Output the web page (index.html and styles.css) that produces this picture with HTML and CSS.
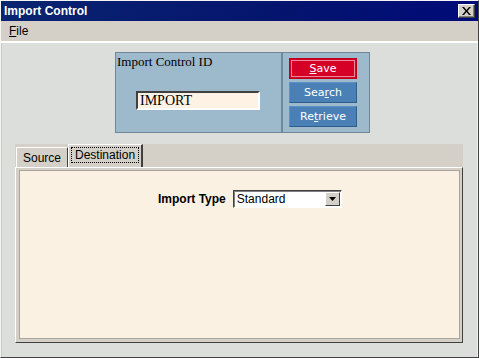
FILE: index.html
```html
<!DOCTYPE html>
<html lang="en">

<head>
    <meta charset="UTF-8">
    <title>Import Control</title>
    <link rel="stylesheet" href="styles.css">
</head>

<body>
    <div class="window">
        <!-- Title Bar -->
        <div class="titlebar">
            <span class="title">Import Control</span>
            <button class="close-btn">
                <svg width="9" height="8" viewBox="0 0 9 8">
                    <path d="M0 0h2l2.5 3L7 0h2L5.5 4L9 8H7L4.5 5L2 8H0l3.5-4z" fill="#000"/>
                </svg>
            </button>
        </div>

        <!-- Menu -->
        <div class="menubar">
            <span class="menu-item"><u>F</u>ile</span>
        </div>
        <div class="rule"></div>

        <div class="client">
            <!-- Header Box -->
            <div class="header-box">
                <div class="id-area">
                    <div class="id-label">Import Control ID</div>
                    <input class="id-input" type="text" value="IMPORT">
                </div>
                <div class="btn-area">
                    <button class="btn btn-save"><u>S</u>ave</button>
                    <button class="btn">Sea<u>r</u>ch</button>
                    <button class="btn">Re<u>t</u>rieve</button>
                </div>
            </div>

            <!-- Tabs -->
            <div class="tabs">
                <div class="tab">Source</div>
                <div class="tab active"><span class="focus">Destination</span></div>
            </div>
            <div class="panel">
                <div class="panel-body">
                    <div class="field-row">
                        <span class="field-label">Import Type</span>
                        <div class="select">
                            <span class="select-value">Standard</span>
                            <span class="select-arrow">
                                <svg width="7" height="4" viewBox="0 0 7 4"><path d="M0 0h7L3.5 4z" fill="#000"/></svg>
                            </span>
                        </div>
                    </div>
                </div>
            </div>
        </div>
    </div>
</body>

</html>
```

FILE: styles.css
```css
body {
    margin: 0;
    font-family: "Liberation Sans", Arial, sans-serif;
}

.window {
    width: 479px;
    height: 358px;
    box-sizing: border-box;
    border: 1px solid;
    border-color: #f4f4f4 #404040 #404040 #f4f4f4;
    background-color: #dcdedb;
    display: flex;
    flex-direction: column;
}

/* Title Bar */
.titlebar {
    height: 20px;
    flex: none;
    display: flex;
    align-items: center;
    justify-content: space-between;
    padding: 0 3px 0 3px;
    background: linear-gradient(to right, #0a2470, #04146e 60%, #000a78);
}

.title {
    color: #fff;
    font-weight: bold;
    font-size: 12px;
}

.close-btn {
    width: 17px;
    height: 14px;
    padding: 0;
    display: flex;
    align-items: center;
    justify-content: center;
    background-color: #d4d0c8;
    border: 1px solid;
    border-color: #fff #404040 #404040 #fff;
    box-shadow: inset -1px -1px 0 #808080;
}

/* Menu */
.menubar {
    height: 20px;
    flex: none;
    background-color: #d4d0c8;
    display: flex;
    align-items: center;
    padding-left: 8px;
}

.menu-item {
    font-size: 12px;
    color: #000;
}

.rule {
    height: 2px;
    flex: none;
    background-color: #fff;
}

.client {
    flex: 1;
    padding-top: 9px;
    border-left: 1px solid #c8c8c4;
    border-right: 1px solid #f0f0f0;
}

/* Header Box */
.header-box {
    display: flex;
    width: 255px;
    height: 81px;
    box-sizing: border-box;
    margin-left: 113px;
    border: 1px solid #6f8797;
    background-color: #9db9cc;
}

.id-area {
    width: 165px;
    border-right: 2px solid #6f8797;
}

.id-label {
    font-family: "Liberation Serif", "Times New Roman", serif;
    font-size: 13px;
    padding: 1px 0 0 1px;
}

.id-input {
    display: block;
    margin: 21px 0 0 20px;
    width: 124px;
    height: 19px;
    box-sizing: border-box;
    padding: 0 2px;
    border: 2px solid;
    border-color: #404040 #fff #fff #404040;
    background-color: #fdf2e4;
    font-family: "Liberation Serif", "Times New Roman", serif;
    font-size: 14px;
    outline: none;
}

.btn-area {
    display: flex;
    flex-direction: column;
    gap: 3px;
    padding: 5px 0 0 6px;
}

.btn {
    width: 68px;
    height: 21px;
    padding: 0;
    box-sizing: border-box;
    font-family: "DejaVu Sans", sans-serif;
    font-size: 11px;
    color: #fff;
    background-color: #4a80b6;
    border: 1px solid;
    border-color: #5b92c6 #2f5d8c #2f5d8c #5b92c6;
}

.btn-save {
    background-color: #d60027;
    border: 1px solid #b8001c;
    box-shadow: inset 0 0 0 1px #d6002a, inset 0 0 0 2px #e98a98;
}

/* Tabs */
.tabs {
    display: flex;
    align-items: flex-end;
    height: 23px;
    margin: 11px 14px 0 13px;
    padding-left: 1px;
    background-color: #d4d0c8;
}

.tab {
    height: 20px;
    box-sizing: border-box;
    padding: 3px 6px 0 6px;
    font-size: 12px;
    background-color: #d4d0c8;
    border: 1px solid;
    border-bottom: none;
    border-color: #fff #404040 transparent #fff;
}

.tab.active {
    height: 23px;
    padding: 2px 2px 0 2px;
    border-right: 2px solid #404040;
}

.focus {
    display: inline-block;
    padding: 0 3px;
    border: 1px dotted #000;
}

.panel {
    height: 176px;
    box-sizing: border-box;
    margin: 0 14px 0 13px;
    padding: 2px 2px 3px 3px;
    background-color: #d4d0c8;
    border: 1px solid;
    border-color: #fff #404040 #404040 #fff;
}

.panel-body {
    height: 100%;
    box-sizing: border-box;
    border: 1px solid;
    border-color: #a9a59d #a9a59d #a9a59d #a9a59d;
    background-color: #faf1e3;
    padding: 19px 0 0 138px;
}

.field-row {
    display: flex;
    align-items: center;
    gap: 7px;
}

.field-label {
    font-weight: bold;
    font-size: 12px;
}

.select {
    width: 109px;
    height: 18px;
    box-sizing: border-box;
    display: flex;
    align-items: center;
    justify-content: space-between;
    background-color: #fff;
    border: 1px solid;
    border-color: #404040 #fff #fff #404040;
    box-shadow: inset 1px 1px 0 #808080;
}

.select-value {
    font-size: 12px;
    padding-left: 3px;
}

.select-arrow {
    width: 15px;
    height: 14px;
    margin-right: 1px;
    box-sizing: border-box;
    display: flex;
    align-items: center;
    justify-content: center;
    background-color: #d4d0c8;
    border: 1px solid;
    border-color: #fff #404040 #404040 #fff;
}
```
